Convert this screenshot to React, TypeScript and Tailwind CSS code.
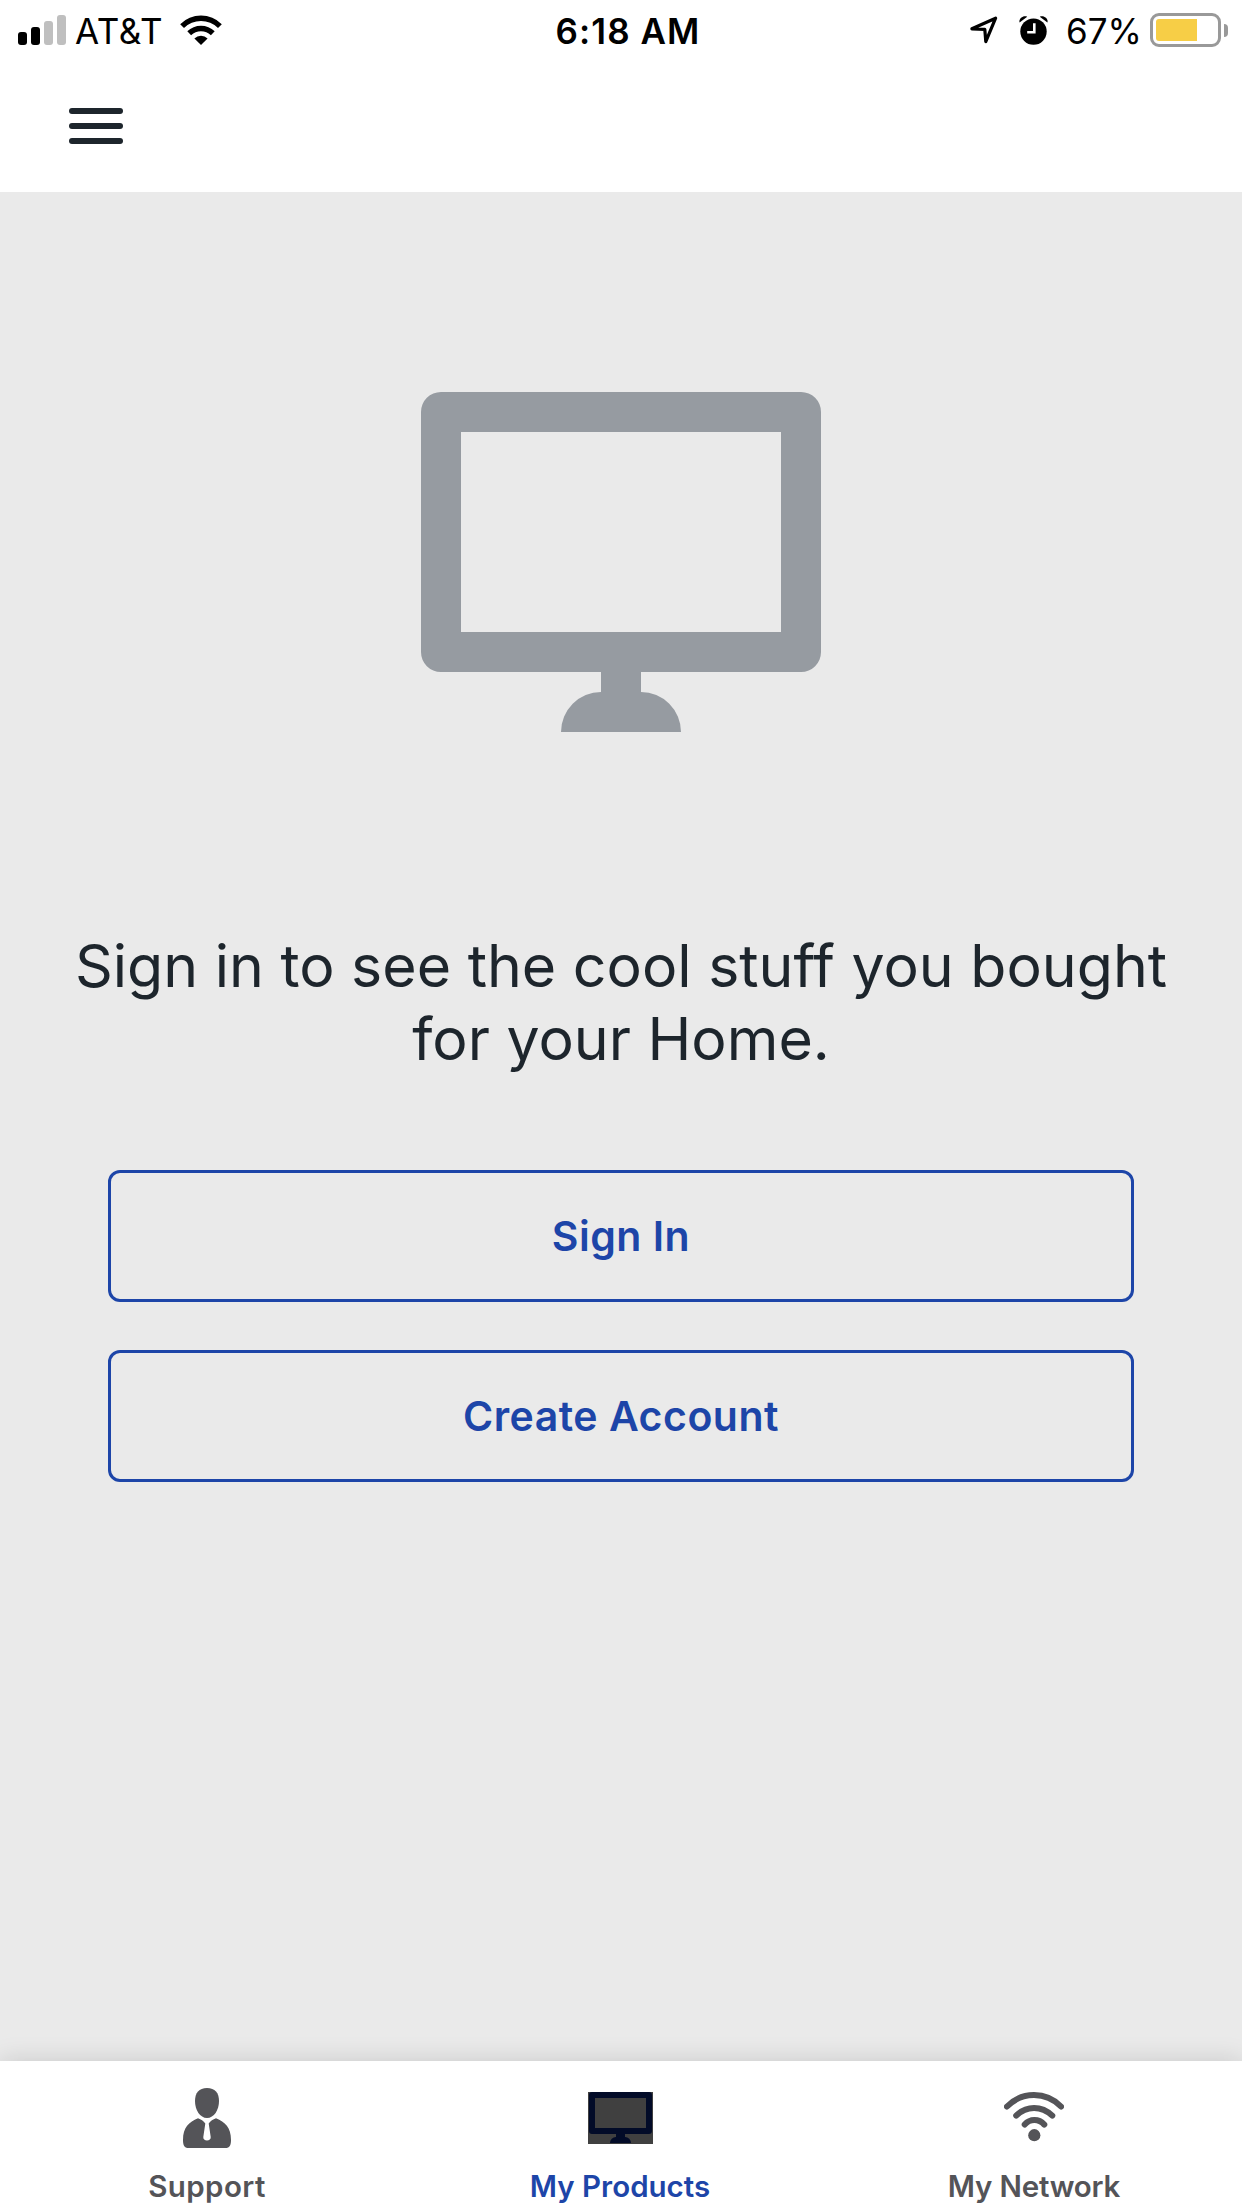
import React from "react";

function SignalBars() {
  return (
    <div className="flex h-[30px] items-end gap-[4px]">
      <span className="h-[13px] w-[9px] rounded-[3px] bg-black" />
      <span className="h-[18px] w-[9px] rounded-[3px] bg-black" />
      <span className="h-[24px] w-[9px] rounded-[3px] bg-[#bfbfbf]" />
      <span className="h-[30px] w-[9px] rounded-[3px] bg-[#bfbfbf]" />
    </div>
  );
}

function StatusWifi() {
  return (
    <svg className="h-[30px] w-[42px]" viewBox="0 0 42 30">
      <path d="M0.2 9.2A29.5 29.5 0 0 1 41.8 9.2L38 13A24.2 24.2 0 0 0 4 13Z" />
      <path d="M7.3 16.3A19.5 19.5 0 0 1 34.7 16.3L30.9 20.2A14.3 14.3 0 0 0 11.1 20.2Z" />
      <path d="M14.4 23.5A9.3 9.3 0 0 1 27.6 23.5L21 30Z" />
    </svg>
  );
}

function LocationArrow() {
  return (
    <svg className="h-[28px] w-[28px]" viewBox="0 0 28 28" fill="none" stroke="#000" strokeWidth="3.2" strokeLinejoin="round">
      <path d="M25.6 2.2L15.8 25.6L14.8 13.4L1.9 12.8Z" />
    </svg>
  );
}

function AlarmClock() {
  return (
    <svg className="h-[29px] w-[29px]" viewBox="0 0 29 29">
      <circle cx="14.5" cy="15.6" r="13.2" />
      <path d="M0.6 6.6C-0.6 3 4 -1 8.2 0.8Z" />
      <path d="M28.4 6.6C29.6 3 25 -1 20.8 0.8Z" />
      <path d="M15.3 7.2V16.2H8.2" fill="none" stroke="#fff" strokeWidth="2.6" />
    </svg>
  );
}

function Battery() {
  return (
    <div className="flex items-center gap-[3px]">
      <div className="h-[34px] w-[71px] rounded-[9px] border-3 border-[#999] p-[3px]">
        <div className="h-full w-[41px] rounded-l-[3px] bg-[#f7ce46]" />
      </div>
      <div className="h-[13px] w-[4px] rounded-r-full bg-[#999]" />
    </div>
  );
}

function Monitor() {
  return (
    <svg className="h-[340px] w-[400px]" viewBox="0 0 400 340" fill="#969ba1">
      <path fillRule="evenodd" d="M20 0H380A20 20 0 0 1 400 20V260A20 20 0 0 1 380 280H220V300A40 40 0 0 1 260 340H140A40 40 0 0 1 180 300V280H20A20 20 0 0 1 0 260V20A20 20 0 0 1 20 0ZM40 40V240H360V40Z" />
    </svg>
  );
}

function SupportIcon() {
  return (
    <svg className="h-[60px] w-[48px]" viewBox="0 0 48 60" fill="#545458">
      <path d="M24 0C32 0 36 5 36 13C36 22 31 30 24 30C17 30 12 22 12 13C12 5 16 0 24 0Z" />
      <path d="M15 30.3C18 31.3 20.5 33 22.3 35.5L20.3 49C20 51 21.8 52.6 24 52.6C26.2 52.6 28 51 27.7 49L25.7 35.5C27.5 33 30 31.3 33 30.3C42 34 48 39.5 48 52C48 57.5 46.5 60 42.5 60H5.5C1.5 60 0 57.5 0 52C0 39.5 6 34 15 30.3Z" />
    </svg>
  );
}

function ProductsIcon() {
  return (
    <svg className="h-[52px] w-[65px]" viewBox="0 0 65 52">
      <rect width="65" height="52" fill="#404040" />
      <path fill="#020b28" fillRule="evenodd" d="M4 0H61A3 3 0 0 1 64 3V39A3 3 0 0 1 61 42H37V45A6 6 0 0 1 43 51H22A6 6 0 0 1 28 45V42H4A3 3 0 0 1 1 39V3A3 3 0 0 1 4 0ZM7 6V36H58V6Z" />
    </svg>
  );
}

function NetworkIcon() {
  return (
    <svg className="h-[50px] w-[60px]" viewBox="0 0 60 50" fill="none" stroke="#545458" strokeWidth="6" strokeLinecap="round">
      <path d="M3 14.5C18 -0.8 42 -0.8 57 14.5" />
      <path d="M12.2 23.6C22.5 13.4 37.5 13.4 48.3 23.6" />
      <path d="M20.7 32.6C26 26.6 34.8 26.6 40.3 32.6" />
      <circle cx="30.3" cy="43.2" r="6.1" fill="#545458" stroke="none" />
    </svg>
  );
}

const outlineButton =
  "flex h-[132px] w-full items-center justify-center rounded-[12px] border-3 border-[#1d45a8] text-[41px] leading-none font-[640] tracking-[0.5px] text-[#1d45a8]";

export default function App() {
  return (
    <div className="flex h-[2208px] w-[1242px] flex-col overflow-hidden bg-[#eaeaea] font-['Inter',sans-serif]">
      <header className="h-[192px] bg-white">
        <div className="grid h-[60px] grid-cols-[1fr_auto_1fr] items-center pr-[14px] pl-[18px] text-[35px] leading-[35px] text-black">
          <div className="flex items-center">
            <SignalBars />
            <span className="mt-[2px] ml-[9px] tracking-[0.6px]">AT&amp;T</span>
            <span className="ml-[17px]"><StatusWifi /></span>
          </div>
          <span className="mt-[2px] pl-[10px] font-semibold tracking-[1.1px]">6:18 AM</span>
          <div className="flex items-center justify-end">
            <LocationArrow />
            <span className="ml-[21px]"><AlarmClock /></span>
            <span className="mt-[2px] ml-[18px]">67%</span>
            <span className="ml-[8px]"><Battery /></span>
          </div>
        </div>
        <button aria-label="Menu" className="mt-[48px] ml-[69px] flex w-[54px] flex-col gap-[9px]">
          <span className="h-[6px] w-full rounded-full bg-[#1d252c]" />
          <span className="h-[6px] w-full rounded-full bg-[#1d252c]" />
          <span className="h-[6px] w-full rounded-full bg-[#1d252c]" />
        </button>
      </header>

      <main className="flex flex-1 flex-col items-center pt-[200px]">
        <Monitor />
        <h1 className="mt-[197px] text-center text-[59px] leading-[73px] font-[370] text-[#1d252c]">
          Sign in to see the cool stuff you bought
          <br />
          for your Home.
        </h1>
        <div className="mt-[95px] flex w-[1026px] flex-col gap-12">
          <button className={outlineButton}>Sign In</button>
          <button className={outlineButton}>Create Account</button>
        </div>
      </main>

      <nav className="grid h-[147px] grid-cols-3 bg-white text-[29.5px] leading-[36px] font-semibold text-[#545458] shadow-[0_0_24px_rgba(0,0,0,0.15)]">
        <a className="flex flex-col items-center">
          <span className="flex h-[107px] pt-[27px]"><SupportIcon /></span>
          <span className="tracking-[0.4px]">Support</span>
        </a>
        <a className="flex flex-col items-center pr-[2px] text-[#1d45a8]">
          <span className="flex h-[107px] pt-[31px]"><ProductsIcon /></span>
          <span>My Products</span>
        </a>
        <a className="flex flex-col items-center pr-[2px]">
          <span className="flex h-[107px] pt-[31px]"><NetworkIcon /></span>
          <span className="tracking-[-0.2px]">My Network</span>
        </a>
      </nav>
    </div>
  );
}
